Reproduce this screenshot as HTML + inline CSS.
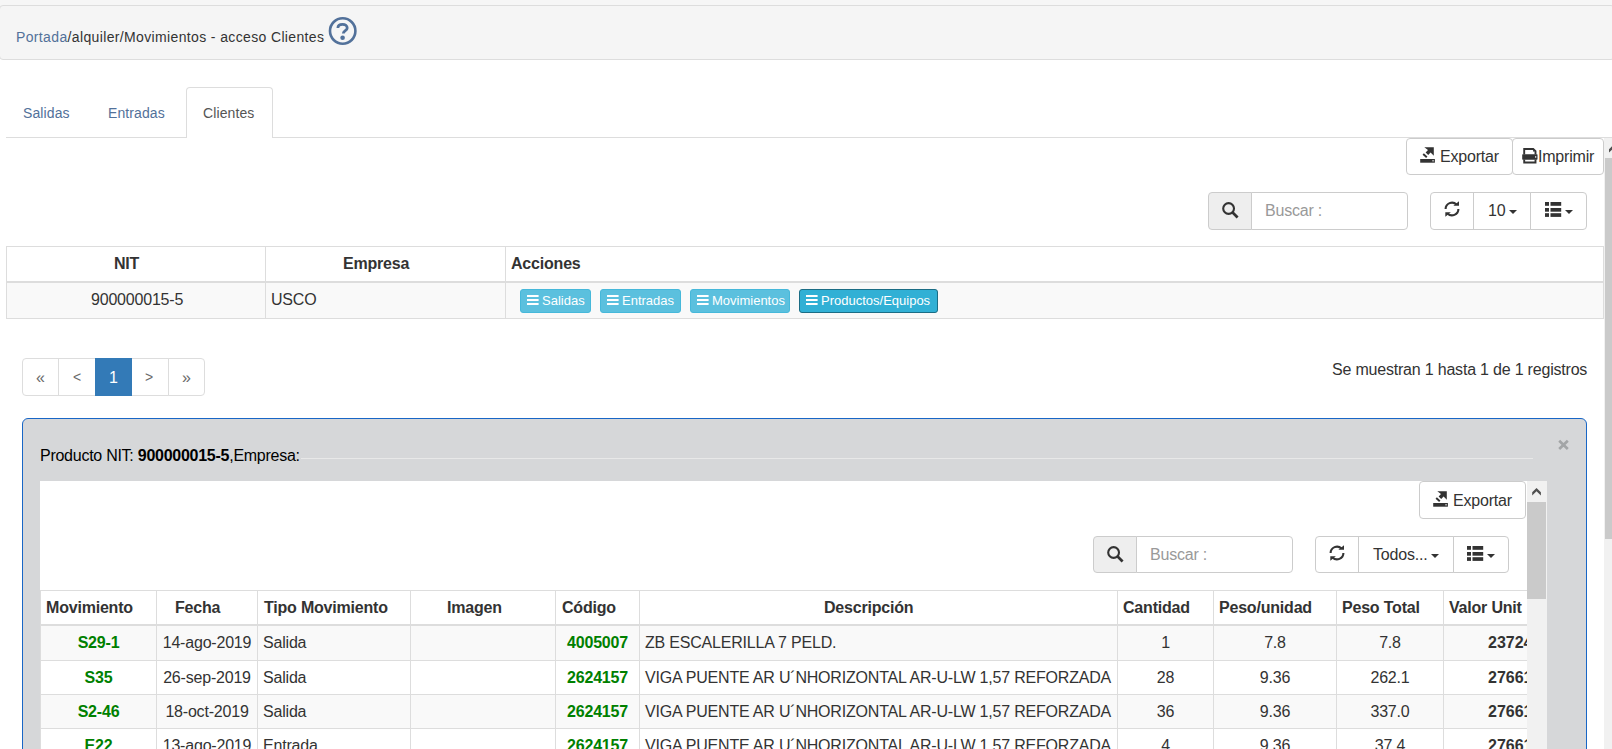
<!DOCTYPE html>
<html><head><meta charset="utf-8"><title>Movimientos - acceso Clientes</title>
<style>
html,body{margin:0;padding:0;width:1612px;height:749px;overflow:hidden;background:#fff;font-family:'Liberation Sans',sans-serif}
b{font-weight:bold}
</style></head><body>
<div style="position:absolute;left:0px;top:0px;width:1612px;height:6px;background:#f6f6f6"></div>
<div style="position:absolute;left:-1px;top:5px;width:1614px;height:53px;background:#f5f5f5;border:1px solid #ddd;border-radius:4px"></div>
<div style="position:absolute;left:16px;top:30px;font:normal 14px/14px 'Liberation Sans',sans-serif;letter-spacing:0.36px;color:#333;white-space:nowrap;"><span style="color:#52719a">Portada</span>/alquiler/Movimientos - acceso Clientes</div>
<svg style="position:absolute;left:328px;top:16px" width="30" height="30" viewBox="0 0 30 30">
<circle cx="14.7" cy="15.0" r="12.7" fill="none" stroke="#52719a" stroke-width="2.6"/>
<path d="M9.9 11.9 C9.9 9.6 12 8.4 14.6 8.4 C17.3 8.4 19.2 9.9 19.2 12 C19.2 14.6 15.3 14.8 15.3 17.6" fill="none" stroke="#52719a" stroke-width="2.8" stroke-linecap="butt"/>
<circle cx="14.6" cy="21.7" r="2.3" fill="#52719a"/>
</svg>
<div style="position:absolute;left:6px;top:137px;width:1606px;height:1px;background:#ddd"></div>
<div style="position:absolute;left:186px;top:87px;width:85px;height:50px;background:#fff;border:1px solid #ddd;border-bottom:none;border-radius:4px 4px 0 0"></div>
<div style="position:absolute;left:23px;top:106px;font:normal 14px/14px 'Liberation Sans',sans-serif;letter-spacing:0.1px;color:#52719a;white-space:nowrap;">Salidas</div>
<div style="position:absolute;left:108px;top:106px;font:normal 14px/14px 'Liberation Sans',sans-serif;letter-spacing:0.1px;color:#52719a;white-space:nowrap;">Entradas</div>
<div style="position:absolute;left:203px;top:106px;font:normal 14px/14px 'Liberation Sans',sans-serif;letter-spacing:0.1px;color:#555;white-space:nowrap;">Clientes</div>
<div style="position:absolute;left:1604px;top:138px;width:8px;height:611px;background:#f1f1f1"></div>
<div style="position:absolute;left:1605px;top:158px;width:7px;height:381px;background:#cacaca"></div>
<svg style="position:absolute;left:1604px;top:138px" width="8" height="20"><path d="M5.0 14.5 V11.3 L9.4 7.0 L13.8 11.3 V14.5 L9.4 10.3 Z" fill="#505050"/></svg>
<div style="position:absolute;left:1406px;top:138px;width:105px;height:35px;background:#fff;border:1px solid #ccc;border-radius:4px"></div>
<div style="position:absolute;left:1512px;top:138px;width:90px;height:35px;background:#fff;border:1px solid #ccc;border-radius:4px"></div>
<svg style="position:absolute;left:1420px;top:147px" width="16" height="17" viewBox="0 0 16 17">
<path d="M4.3 0.2 H13.8 V8.8 L10.6 5.6 L8.2 8.0 L5.6 5.4 L8.0 3.0 Z" fill="#333"/>
<path d="M3.2 7.0 L6.8 10.2" stroke="#333" stroke-width="2"/>
<rect x="0.2" y="12.0" width="14.7" height="3.7" fill="#333"/>
<rect x="12.4" y="13.2" width="1.3" height="1.2" fill="#fff"/>
</svg>
<div style="position:absolute;left:1440px;top:149px;font:normal 16px/16px 'Liberation Sans',sans-serif;letter-spacing:-0.2px;color:#333;white-space:nowrap;">Exportar</div>
<svg style="position:absolute;left:1522px;top:148px" width="16" height="17" viewBox="0 0 16 17">
<path d="M2.2 6.4 V0.95 H11.2 L13.5 3.2 V6.4" fill="none" stroke="#333" stroke-width="1.9"/>
<path d="M11.0 2.2 H12.3 V3.6 H11.0 Z" fill="#333"/>
<path d="M2.2 11.4 V14.55 H13.5 V11.4" fill="none" stroke="#333" stroke-width="1.9"/>
<rect x="0.2" y="6.2" width="15.3" height="5.5" rx="0.6" fill="#333"/>
<rect x="13.0" y="8.3" width="1.3" height="1.3" fill="#fff"/>
</svg>
<div style="position:absolute;left:1538px;top:149px;font:normal 16px/16px 'Liberation Sans',sans-serif;letter-spacing:-0.2px;color:#333;white-space:nowrap;">Imprimir</div>
<div style="position:absolute;left:1208px;top:192px;width:42px;height:36px;background:#eee;border:1px solid #ccc;border-radius:4px 0 0 4px"></div>
<div style="position:absolute;left:1251px;top:192px;width:155px;height:36px;background:#fff;border:1px solid #ccc;border-radius:0 4px 4px 0"></div>
<svg style="position:absolute;left:1222px;top:202px" width="17" height="17" viewBox="0 0 17 17">
<circle cx="6.6" cy="6.5" r="5.4" fill="none" stroke="#333" stroke-width="2.1"/>
<path d="M10.4 10.3 L15.6 15.5" stroke="#333" stroke-width="2.7"/>
</svg>
<div style="position:absolute;left:1265px;top:203px;font:normal 16px/16px 'Liberation Sans',sans-serif;letter-spacing:-0.2px;color:#999;white-space:nowrap;">Buscar :</div>
<div style="position:absolute;left:1430px;top:192px;width:42px;height:36px;background:#fff;border:1px solid #ccc;border-radius:4px 0 0 4px"></div>
<div style="position:absolute;left:1473px;top:192px;width:56px;height:36px;background:#fff;border:1px solid #ccc;border-radius:0"></div>
<div style="position:absolute;left:1530px;top:192px;width:55px;height:36px;background:#fff;border:1px solid #ccc;border-radius:0 4px 4px 0"></div>
<svg style="position:absolute;left:1444px;top:200px" width="17" height="18" viewBox="0 0 17 18">
<path d="M1.6 9.0 A6.4 6.4 0 0 1 12.5 4.5" fill="none" stroke="#333" stroke-width="2.1"/>
<path d="M15.0 1.2 V5.7 H9.4 Z" fill="#333"/>
<path d="M14.4 9.0 A6.4 6.4 0 0 1 3.5 13.5" fill="none" stroke="#333" stroke-width="2.1"/>
<path d="M1.3 16.8 V12.3 H6.9 Z" fill="#333"/>
</svg>
<div style="position:absolute;left:1488px;top:203px;font:normal 16px/16px 'Liberation Sans',sans-serif;letter-spacing:-0.2px;color:#333;white-space:nowrap;">10</div>
<div style="position:absolute;left:1509px;top:210px;width:0;height:0;border-left:4px solid transparent;border-right:4px solid transparent;border-top:4px solid #333"></div>
<svg style="position:absolute;left:1545px;top:202px" width="17" height="16" viewBox="0 0 17 16">
<rect x="0" y="0" width="4" height="3.8" fill="#333"/><rect x="5.5" y="0" width="10.7" height="3.8" fill="#333"/>
<rect x="0" y="6" width="4" height="3.7" fill="#333"/><rect x="5.5" y="6" width="10.7" height="3.7" fill="#333"/>
<rect x="0" y="11.2" width="4" height="3.7" fill="#333"/><rect x="5.5" y="11.2" width="10.7" height="3.7" fill="#333"/>
</svg>
<div style="position:absolute;left:1565px;top:210px;width:0;height:0;border-left:4px solid transparent;border-right:4px solid transparent;border-top:4px solid #333"></div>
<div style="position:absolute;left:6px;top:246px;width:1598px;height:73px;background:#fff;box-sizing:border-box;border:1px solid #ddd"></div>
<div style="position:absolute;left:7px;top:283px;width:1596px;height:35px;background:#f9f9f9"></div>
<div style="position:absolute;left:7px;top:281px;width:1596px;height:2px;background:#ddd"></div>
<div style="position:absolute;left:265px;top:247px;width:1px;height:71px;background:#ddd"></div>
<div style="position:absolute;left:505px;top:247px;width:1px;height:71px;background:#ddd"></div>
<div style="position:absolute;left:114px;top:256px;font:bold 16px/16px 'Liberation Sans',sans-serif;letter-spacing:-0.2px;color:#333;white-space:nowrap;">NIT</div>
<div style="position:absolute;left:343px;top:256px;font:bold 16px/16px 'Liberation Sans',sans-serif;letter-spacing:-0.2px;color:#333;white-space:nowrap;">Empresa</div>
<div style="position:absolute;left:511px;top:256px;font:bold 16px/16px 'Liberation Sans',sans-serif;letter-spacing:-0.2px;color:#333;white-space:nowrap;">Acciones</div>
<div style="position:absolute;left:91px;top:292px;font:normal 16px/16px 'Liberation Sans',sans-serif;letter-spacing:-0.2px;color:#333;white-space:nowrap;">900000015-5</div>
<div style="position:absolute;left:271px;top:292px;font:normal 16px/16px 'Liberation Sans',sans-serif;letter-spacing:-0.2px;color:#333;white-space:nowrap;">USCO</div>
<div style="position:absolute;left:520px;top:289px;width:69px;height:22px;background:#5bc0de;border:1px solid #46b8da;border-radius:3px"></div>
<svg style="position:absolute;left:527px;top:295px" width="13" height="12" viewBox="0 0 13 12">
<rect x="0" y="0" width="11.6" height="2" fill="#fff"/><rect x="0" y="4" width="11.6" height="2" fill="#fff"/><rect x="0" y="8" width="11.6" height="2" fill="#fff"/>
</svg>
<div style="position:absolute;left:542px;top:294px;font:normal 13px/13px 'Liberation Sans',sans-serif;letter-spacing:0px;color:#fff;white-space:nowrap;">Salidas</div>
<div style="position:absolute;left:600px;top:289px;width:79px;height:22px;background:#5bc0de;border:1px solid #46b8da;border-radius:3px"></div>
<svg style="position:absolute;left:607px;top:295px" width="13" height="12" viewBox="0 0 13 12">
<rect x="0" y="0" width="11.6" height="2" fill="#fff"/><rect x="0" y="4" width="11.6" height="2" fill="#fff"/><rect x="0" y="8" width="11.6" height="2" fill="#fff"/>
</svg>
<div style="position:absolute;left:622px;top:294px;font:normal 13px/13px 'Liberation Sans',sans-serif;letter-spacing:0px;color:#fff;white-space:nowrap;">Entradas</div>
<div style="position:absolute;left:690px;top:289px;width:98px;height:22px;background:#5bc0de;border:1px solid #46b8da;border-radius:3px"></div>
<svg style="position:absolute;left:697px;top:295px" width="13" height="12" viewBox="0 0 13 12">
<rect x="0" y="0" width="11.6" height="2" fill="#fff"/><rect x="0" y="4" width="11.6" height="2" fill="#fff"/><rect x="0" y="8" width="11.6" height="2" fill="#fff"/>
</svg>
<div style="position:absolute;left:712px;top:294px;font:normal 13px/13px 'Liberation Sans',sans-serif;letter-spacing:0px;color:#fff;white-space:nowrap;">Movimientos</div>
<div style="position:absolute;left:799px;top:289px;width:137px;height:22px;background:#31b0d5;border:1px solid #1b6d85;border-radius:3px"></div>
<svg style="position:absolute;left:806px;top:295px" width="13" height="12" viewBox="0 0 13 12">
<rect x="0" y="0" width="11.6" height="2" fill="#fff"/><rect x="0" y="4" width="11.6" height="2" fill="#fff"/><rect x="0" y="8" width="11.6" height="2" fill="#fff"/>
</svg>
<div style="position:absolute;left:821px;top:294px;font:normal 13px/13px 'Liberation Sans',sans-serif;letter-spacing:0px;color:#fff;white-space:nowrap;">Productos/Equipos</div>
<div style="position:absolute;left:22px;top:358px;width:35px;height:36px;background:#fff;border:1px solid #ddd;border-radius:4px 0 0 4px"></div>
<div style="position:absolute;left:58px;top:358px;width:36px;height:36px;background:#fff;border:1px solid #ddd;border-radius:0"></div>
<div style="position:absolute;left:131px;top:358px;width:36px;height:36px;background:#fff;border:1px solid #ddd;border-radius:0"></div>
<div style="position:absolute;left:168px;top:358px;width:35px;height:36px;background:#fff;border:1px solid #ddd;border-radius:0 4px 4px 0"></div>
<div style="position:absolute;left:95px;top:358px;width:35px;height:36px;background:#337ab7;border:1px solid #337ab7;border-radius:0"></div>
<div style="position:absolute;left:36px;top:370px;font:normal 16px/16px 'Liberation Sans',sans-serif;letter-spacing:-0.2px;color:#6a6a6a;white-space:nowrap;">&laquo;</div>
<div style="position:absolute;left:73px;top:370px;font:normal 14px/14px 'Liberation Sans',sans-serif;letter-spacing:0px;color:#6a6a6a;white-space:nowrap;">&lt;</div>
<div style="position:absolute;left:109px;top:370px;font:normal 16px/16px 'Liberation Sans',sans-serif;letter-spacing:-0.2px;color:#fff;white-space:nowrap;">1</div>
<div style="position:absolute;left:145px;top:370px;font:normal 14px/14px 'Liberation Sans',sans-serif;letter-spacing:0px;color:#6a6a6a;white-space:nowrap;">&gt;</div>
<div style="position:absolute;left:182px;top:370px;font:normal 16px/16px 'Liberation Sans',sans-serif;letter-spacing:-0.2px;color:#6a6a6a;white-space:nowrap;">&raquo;</div>
<div style="position:absolute;left:1332px;top:362px;font:normal 16px/16px 'Liberation Sans',sans-serif;letter-spacing:-0.2px;color:#333;white-space:nowrap;">Se muestran 1 hasta 1 de 1 registros</div>
<div style="position:absolute;left:22px;top:418px;width:1563px;height:400px;background:#d6d7d9;border:1px solid #1866c6;border-radius:6px"></div>
<svg style="position:absolute;left:1557px;top:439px" width="13" height="12"><path d="M2.2 1.8 L10.8 9.9 M10.8 1.8 L2.2 9.9" stroke="#a3a5a7" stroke-width="2.7"/></svg>
<div style="position:absolute;left:40px;top:448px;font:normal 16px/16px 'Liberation Sans',sans-serif;letter-spacing:-0.26px;color:#000;white-space:nowrap;">Producto NIT: <b>900000015-5</b>,Empresa:</div>
<div style="position:absolute;left:301px;top:458px;width:1232px;height:1px;background:#e8e8e8"></div>
<div style="position:absolute;left:40px;top:481px;width:1487px;height:268px;background:#fff"></div>
<div style="position:absolute;left:1527px;top:481px;width:20px;height:268px;background:#f1f1f1"></div>
<div style="position:absolute;left:1527px;top:502px;width:19px;height:97px;background:#cacaca"></div>
<svg style="position:absolute;left:1527px;top:481px" width="20" height="21"><path d="M5.2 14.5 V11.3 L9.5 7.0 L13.9 11.3 V14.5 L9.5 10.3 Z" fill="#505050"/></svg>
<div style="position:absolute;left:40px;top:481px;width:1487px;height:268px;overflow:hidden">
<div style="position:absolute;left:1379px;top:0px;width:105px;height:36px;background:#fff;border:1px solid #ccc;border-radius:4px"></div>
<svg style="position:absolute;left:1393px;top:10px" width="16" height="17" viewBox="0 0 16 17">
<path d="M4.3 0.2 H13.8 V8.8 L10.6 5.6 L8.2 8.0 L5.6 5.4 L8.0 3.0 Z" fill="#333"/>
<path d="M3.2 7.0 L6.8 10.2" stroke="#333" stroke-width="2"/>
<rect x="0.2" y="12.0" width="14.7" height="3.7" fill="#333"/>
<rect x="12.4" y="13.2" width="1.3" height="1.2" fill="#fff"/>
</svg>
<div style="position:absolute;left:1413px;top:12px;font:normal 16px/16px 'Liberation Sans',sans-serif;letter-spacing:-0.2px;color:#333;white-space:nowrap;">Exportar</div>
<div style="position:absolute;left:1053px;top:55px;width:42px;height:35px;background:#eee;border:1px solid #ccc;border-radius:4px 0 0 4px"></div>
<div style="position:absolute;left:1096px;top:55px;width:155px;height:35px;background:#fff;border:1px solid #ccc;border-radius:0 4px 4px 0"></div>
<svg style="position:absolute;left:1067px;top:65px" width="17" height="17" viewBox="0 0 17 17">
<circle cx="6.6" cy="6.5" r="5.4" fill="none" stroke="#333" stroke-width="2.1"/>
<path d="M10.4 10.3 L15.6 15.5" stroke="#333" stroke-width="2.7"/>
</svg>
<div style="position:absolute;left:1110px;top:66px;font:normal 16px/16px 'Liberation Sans',sans-serif;letter-spacing:-0.2px;color:#999;white-space:nowrap;">Buscar :</div>
<div style="position:absolute;left:1275px;top:55px;width:42px;height:35px;background:#fff;border:1px solid #ccc;border-radius:4px 0 0 4px"></div>
<div style="position:absolute;left:1318px;top:55px;width:94px;height:35px;background:#fff;border:1px solid #ccc;border-radius:0"></div>
<svg style="position:absolute;left:1289px;top:63px" width="17" height="18" viewBox="0 0 17 18">
<path d="M1.6 9.0 A6.4 6.4 0 0 1 12.5 4.5" fill="none" stroke="#333" stroke-width="2.1"/>
<path d="M15.0 1.2 V5.7 H9.4 Z" fill="#333"/>
<path d="M14.4 9.0 A6.4 6.4 0 0 1 3.5 13.5" fill="none" stroke="#333" stroke-width="2.1"/>
<path d="M1.3 16.8 V12.3 H6.9 Z" fill="#333"/>
</svg>
<div style="position:absolute;left:1333px;top:66px;font:normal 16px/16px 'Liberation Sans',sans-serif;letter-spacing:-0.2px;color:#333;white-space:nowrap;">Todos...</div>
<div style="position:absolute;left:1391px;top:73px;width:0;height:0;border-left:4px solid transparent;border-right:4px solid transparent;border-top:4px solid #333"></div>
<div style="position:absolute;left:1413px;top:55px;width:54px;height:35px;background:#fff;border:1px solid #ccc;border-radius:0 4px 4px 0"></div>
<svg style="position:absolute;left:1427px;top:65px" width="17" height="16" viewBox="0 0 17 16">
<rect x="0" y="0" width="4" height="3.8" fill="#333"/><rect x="5.5" y="0" width="10.7" height="3.8" fill="#333"/>
<rect x="0" y="6" width="4" height="3.7" fill="#333"/><rect x="5.5" y="6" width="10.7" height="3.7" fill="#333"/>
<rect x="0" y="11.2" width="4" height="3.7" fill="#333"/><rect x="5.5" y="11.2" width="10.7" height="3.7" fill="#333"/>
</svg>
<div style="position:absolute;left:1447px;top:73px;width:0;height:0;border-left:4px solid transparent;border-right:4px solid transparent;border-top:4px solid #333"></div>
<div style="position:absolute;left:0px;top:109px;width:1560px;height:1px;background:#ddd"></div>
<div style="position:absolute;left:0px;top:110px;width:1560px;height:33px;background:#fff"></div>
<div style="position:absolute;left:0px;top:143px;width:1560px;height:2px;background:#ddd"></div>
<div style="position:absolute;left:0px;top:145px;width:1560px;height:34px;background:#f9f9f9"></div>
<div style="position:absolute;left:0px;top:180px;width:1560px;height:33px;background:#fff"></div>
<div style="position:absolute;left:0px;top:214px;width:1560px;height:33px;background:#f9f9f9"></div>
<div style="position:absolute;left:0px;top:248px;width:1560px;height:33px;background:#fff"></div>
<div style="position:absolute;left:0px;top:179px;width:1560px;height:1px;background:#ddd"></div>
<div style="position:absolute;left:0px;top:213px;width:1560px;height:1px;background:#ddd"></div>
<div style="position:absolute;left:0px;top:247px;width:1560px;height:1px;background:#ddd"></div>
<div style="position:absolute;left:0px;top:109px;width:1px;height:200px;background:#ddd"></div>
<div style="position:absolute;left:116px;top:110px;width:1px;height:200px;background:#ddd"></div>
<div style="position:absolute;left:217px;top:110px;width:1px;height:200px;background:#ddd"></div>
<div style="position:absolute;left:370px;top:110px;width:1px;height:200px;background:#ddd"></div>
<div style="position:absolute;left:515px;top:110px;width:1px;height:200px;background:#ddd"></div>
<div style="position:absolute;left:599px;top:110px;width:1px;height:200px;background:#ddd"></div>
<div style="position:absolute;left:1077px;top:110px;width:1px;height:200px;background:#ddd"></div>
<div style="position:absolute;left:1173px;top:110px;width:1px;height:200px;background:#ddd"></div>
<div style="position:absolute;left:1296px;top:110px;width:1px;height:200px;background:#ddd"></div>
<div style="position:absolute;left:1403px;top:110px;width:1px;height:200px;background:#ddd"></div>
<div style="position:absolute;left:6px;top:119px;font:bold 16px/16px 'Liberation Sans',sans-serif;letter-spacing:-0.2px;color:#333;white-space:nowrap;">Movimiento</div>
<div style="position:absolute;left:135px;top:119px;font:bold 16px/16px 'Liberation Sans',sans-serif;letter-spacing:-0.2px;color:#333;white-space:nowrap;">Fecha</div>
<div style="position:absolute;left:224px;top:119px;font:bold 16px/16px 'Liberation Sans',sans-serif;letter-spacing:-0.2px;color:#333;white-space:nowrap;">Tipo Movimiento</div>
<div style="position:absolute;left:407px;top:119px;font:bold 16px/16px 'Liberation Sans',sans-serif;letter-spacing:-0.2px;color:#333;white-space:nowrap;">Imagen</div>
<div style="position:absolute;left:522px;top:119px;font:bold 16px/16px 'Liberation Sans',sans-serif;letter-spacing:-0.2px;color:#333;white-space:nowrap;">Código</div>
<div style="position:absolute;left:784px;top:119px;font:bold 16px/16px 'Liberation Sans',sans-serif;letter-spacing:-0.2px;color:#333;white-space:nowrap;">Descripción</div>
<div style="position:absolute;left:1083px;top:119px;font:bold 16px/16px 'Liberation Sans',sans-serif;letter-spacing:-0.2px;color:#333;white-space:nowrap;">Cantidad</div>
<div style="position:absolute;left:1179px;top:119px;font:bold 16px/16px 'Liberation Sans',sans-serif;letter-spacing:-0.2px;color:#333;white-space:nowrap;">Peso/unidad</div>
<div style="position:absolute;left:1302px;top:119px;font:bold 16px/16px 'Liberation Sans',sans-serif;letter-spacing:-0.2px;color:#333;white-space:nowrap;">Peso Total</div>
<div style="position:absolute;left:1409px;top:119px;font:bold 16px/16px 'Liberation Sans',sans-serif;letter-spacing:-0.2px;color:#333;white-space:nowrap;">Valor Unit</div>
<div style="position:absolute;left:1px;top:154px;width:115px;text-align:center;font:bold 16px/16px 'Liberation Sans',sans-serif;letter-spacing:-0.2px;color:#008000;white-space:nowrap">S29-1</div>
<div style="position:absolute;left:117px;top:154px;width:100px;text-align:center;font:normal 16px/16px 'Liberation Sans',sans-serif;letter-spacing:-0.2px;color:#333;white-space:nowrap">14-ago-2019</div>
<div style="position:absolute;left:223px;top:154px;font:normal 16px/16px 'Liberation Sans',sans-serif;letter-spacing:-0.2px;color:#333;white-space:nowrap;">Salida</div>
<div style="position:absolute;left:516px;top:154px;width:83px;text-align:center;font:bold 16px/16px 'Liberation Sans',sans-serif;letter-spacing:-0.2px;color:#008000;white-space:nowrap">4005007</div>
<div style="position:absolute;left:605px;top:154px;font:normal 16px/16px 'Liberation Sans',sans-serif;letter-spacing:-0.2px;color:#333;white-space:nowrap;">ZB ESCALERILLA 7 PELD.</div>
<div style="position:absolute;left:1078px;top:154px;width:95px;text-align:center;font:normal 16px/16px 'Liberation Sans',sans-serif;letter-spacing:-0.2px;color:#333;white-space:nowrap">1</div>
<div style="position:absolute;left:1174px;top:154px;width:122px;text-align:center;font:normal 16px/16px 'Liberation Sans',sans-serif;letter-spacing:-0.2px;color:#333;white-space:nowrap">7.8</div>
<div style="position:absolute;left:1297px;top:154px;width:106px;text-align:center;font:normal 16px/16px 'Liberation Sans',sans-serif;letter-spacing:-0.2px;color:#333;white-space:nowrap">7.8</div>
<div style="position:absolute;left:1448px;top:154px;font:bold 16px/16px 'Liberation Sans',sans-serif;letter-spacing:0px;color:#333;white-space:nowrap;">23724</div>
<div style="position:absolute;left:1px;top:189px;width:115px;text-align:center;font:bold 16px/16px 'Liberation Sans',sans-serif;letter-spacing:-0.2px;color:#008000;white-space:nowrap">S35</div>
<div style="position:absolute;left:117px;top:189px;width:100px;text-align:center;font:normal 16px/16px 'Liberation Sans',sans-serif;letter-spacing:-0.2px;color:#333;white-space:nowrap">26-sep-2019</div>
<div style="position:absolute;left:223px;top:189px;font:normal 16px/16px 'Liberation Sans',sans-serif;letter-spacing:-0.2px;color:#333;white-space:nowrap;">Salida</div>
<div style="position:absolute;left:516px;top:189px;width:83px;text-align:center;font:bold 16px/16px 'Liberation Sans',sans-serif;letter-spacing:-0.2px;color:#008000;white-space:nowrap">2624157</div>
<div style="position:absolute;left:605px;top:189px;font:normal 16px/16px 'Liberation Sans',sans-serif;letter-spacing:-0.2px;color:#333;white-space:nowrap;">VIGA PUENTE AR U´NHORIZONTAL AR-U-LW 1,57 REFORZADA</div>
<div style="position:absolute;left:1078px;top:189px;width:95px;text-align:center;font:normal 16px/16px 'Liberation Sans',sans-serif;letter-spacing:-0.2px;color:#333;white-space:nowrap">28</div>
<div style="position:absolute;left:1174px;top:189px;width:122px;text-align:center;font:normal 16px/16px 'Liberation Sans',sans-serif;letter-spacing:-0.2px;color:#333;white-space:nowrap">9.36</div>
<div style="position:absolute;left:1297px;top:189px;width:106px;text-align:center;font:normal 16px/16px 'Liberation Sans',sans-serif;letter-spacing:-0.2px;color:#333;white-space:nowrap">262.1</div>
<div style="position:absolute;left:1448px;top:189px;font:bold 16px/16px 'Liberation Sans',sans-serif;letter-spacing:0px;color:#333;white-space:nowrap;">27661</div>
<div style="position:absolute;left:1px;top:223px;width:115px;text-align:center;font:bold 16px/16px 'Liberation Sans',sans-serif;letter-spacing:-0.2px;color:#008000;white-space:nowrap">S2-46</div>
<div style="position:absolute;left:117px;top:223px;width:100px;text-align:center;font:normal 16px/16px 'Liberation Sans',sans-serif;letter-spacing:-0.2px;color:#333;white-space:nowrap">18-oct-2019</div>
<div style="position:absolute;left:223px;top:223px;font:normal 16px/16px 'Liberation Sans',sans-serif;letter-spacing:-0.2px;color:#333;white-space:nowrap;">Salida</div>
<div style="position:absolute;left:516px;top:223px;width:83px;text-align:center;font:bold 16px/16px 'Liberation Sans',sans-serif;letter-spacing:-0.2px;color:#008000;white-space:nowrap">2624157</div>
<div style="position:absolute;left:605px;top:223px;font:normal 16px/16px 'Liberation Sans',sans-serif;letter-spacing:-0.2px;color:#333;white-space:nowrap;">VIGA PUENTE AR U´NHORIZONTAL AR-U-LW 1,57 REFORZADA</div>
<div style="position:absolute;left:1078px;top:223px;width:95px;text-align:center;font:normal 16px/16px 'Liberation Sans',sans-serif;letter-spacing:-0.2px;color:#333;white-space:nowrap">36</div>
<div style="position:absolute;left:1174px;top:223px;width:122px;text-align:center;font:normal 16px/16px 'Liberation Sans',sans-serif;letter-spacing:-0.2px;color:#333;white-space:nowrap">9.36</div>
<div style="position:absolute;left:1297px;top:223px;width:106px;text-align:center;font:normal 16px/16px 'Liberation Sans',sans-serif;letter-spacing:-0.2px;color:#333;white-space:nowrap">337.0</div>
<div style="position:absolute;left:1448px;top:223px;font:bold 16px/16px 'Liberation Sans',sans-serif;letter-spacing:0px;color:#333;white-space:nowrap;">27661</div>
<div style="position:absolute;left:1px;top:257px;width:115px;text-align:center;font:bold 16px/16px 'Liberation Sans',sans-serif;letter-spacing:-0.2px;color:#008000;white-space:nowrap">E22</div>
<div style="position:absolute;left:117px;top:257px;width:100px;text-align:center;font:normal 16px/16px 'Liberation Sans',sans-serif;letter-spacing:-0.2px;color:#333;white-space:nowrap">13-ago-2019</div>
<div style="position:absolute;left:223px;top:257px;font:normal 16px/16px 'Liberation Sans',sans-serif;letter-spacing:-0.2px;color:#333;white-space:nowrap;">Entrada</div>
<div style="position:absolute;left:516px;top:257px;width:83px;text-align:center;font:bold 16px/16px 'Liberation Sans',sans-serif;letter-spacing:-0.2px;color:#008000;white-space:nowrap">2624157</div>
<div style="position:absolute;left:605px;top:257px;font:normal 16px/16px 'Liberation Sans',sans-serif;letter-spacing:-0.2px;color:#333;white-space:nowrap;">VIGA PUENTE AR U´NHORIZONTAL AR-U-LW 1,57 REFORZADA</div>
<div style="position:absolute;left:1078px;top:257px;width:95px;text-align:center;font:normal 16px/16px 'Liberation Sans',sans-serif;letter-spacing:-0.2px;color:#333;white-space:nowrap">4</div>
<div style="position:absolute;left:1174px;top:257px;width:122px;text-align:center;font:normal 16px/16px 'Liberation Sans',sans-serif;letter-spacing:-0.2px;color:#333;white-space:nowrap">9.36</div>
<div style="position:absolute;left:1297px;top:257px;width:106px;text-align:center;font:normal 16px/16px 'Liberation Sans',sans-serif;letter-spacing:-0.2px;color:#333;white-space:nowrap">37.4</div>
<div style="position:absolute;left:1448px;top:257px;font:bold 16px/16px 'Liberation Sans',sans-serif;letter-spacing:0px;color:#333;white-space:nowrap;">27661</div>
</div>
</body></html>
